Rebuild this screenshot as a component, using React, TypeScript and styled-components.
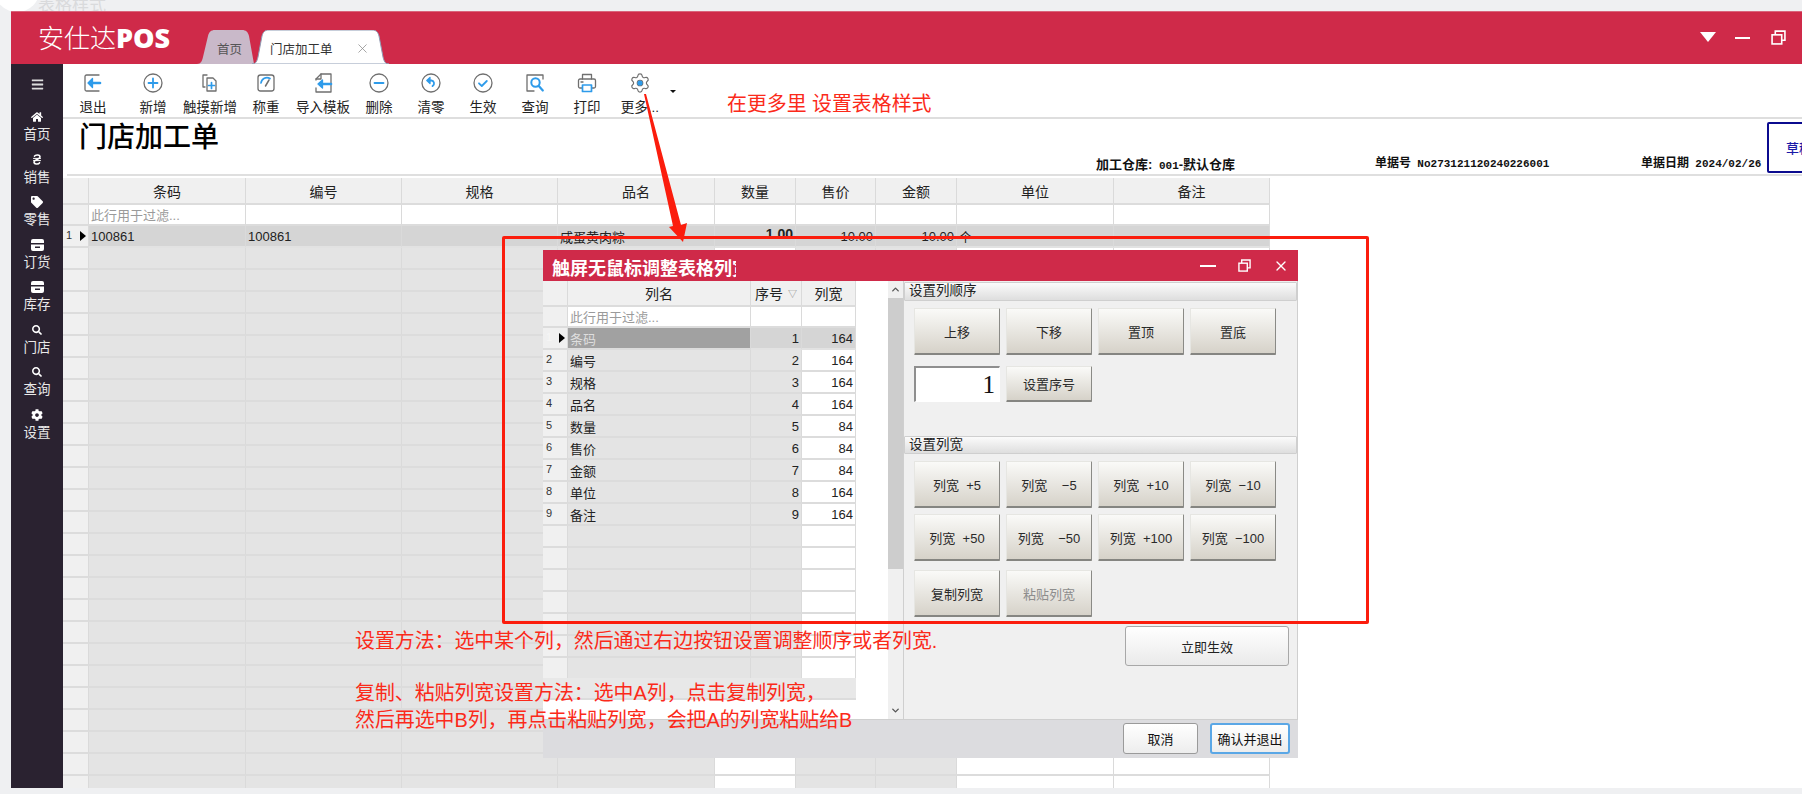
import React from "react";
import styled, { createGlobalStyle } from "styled-components";
import { FaHome, FaTag, FaCog, FaSearch, FaBars } from "react-icons/fa";
import { ChevronUp, ChevronDown, X, Settings } from "lucide-react";

const Global = createGlobalStyle`
  html, body { margin: 0; padding: 0; background: #eff0f2; }
  * { box-sizing: border-box; }
  body { font-family: "Liberation Sans", "Noto Sans CJK SC", sans-serif; }
`;

const Page = styled.div`
  position: relative; width: 1802px; height: 794px; overflow: hidden;
  display: flex; flex-direction: column; background: #eff0f2;
`;
const TopStrip = styled.div`
  position: relative; height: 11px; flex: none; overflow: hidden; padding-left: 38px;
  font-size: 17px; line-height: 12px; color: #d9dadc;
  &::before { content: ""; position: absolute; left: -6px; top: -34px; width: 46px; height: 46px; border-radius: 50%; background: #fff; }
`;
const Windowed = styled.div`
  flex: 1; min-height: 0; margin-left: 11px; display: flex; flex-direction: column;
`;
const Header = styled.header`
  height: 53px; flex: none; background: #cf2a49; display: flex; align-items: flex-end; border-top: 1px solid #d9647b;
  position: relative;
`;
const Logo = styled.div`
  width: 186px; padding-left: 27px; align-self: center; margin-top: -2px; color: #fff; font-size: 26px; font-weight: 300; white-space: nowrap;
  b { font-family: "Open Sans", "Liberation Sans", sans-serif; font-weight: 800; font-size: 27px; }
`;
const Tabs = styled.div` display: flex; align-items: flex-end; height: 34px; `;
const Tab = styled.div<{ $w: number; $active?: boolean }>`
  position: relative; width: ${p => p.$w}px; height: 34px; margin-right: -2px;
  display: flex; align-items: center; font-size: 12.5px; color: ${p => (p.$active ? "#333" : "#555")};
  padding: 2px 0 0 ${p => (p.$active ? 18 : 20)}px;
  z-index: ${p => (p.$active ? 2 : 1)};
  span { position: relative; }
  svg.shape { position: absolute; inset: 0; }
`;
const TabClose = styled.span` position: relative; margin-left: 22px; color: #8a8a8a; display: flex; `;
const WinControls = styled.div`
  margin-left: auto; align-self: center; display: flex; align-items: center; margin-top: -2px; margin-right: 16px; color: #fff;
`;
const Tri = styled.div`
  width: 0; height: 0; border-left: 8px solid transparent; border-right: 8px solid transparent; border-top: 10px solid #fff; margin-right: 19px;
`;
const Dash = styled.div` width: 15px; height: 2px; background: #fff; margin-right: 21px; margin-top: 2px; `;

const Body = styled.div` flex: 1; min-height: 0; display: flex; `;
const Sidebar = styled.nav`
  width: 52px; flex: none; background: #2a2230; color: #e9e9e9; display: flex; flex-direction: column; align-items: center;
`;
const Burger = styled.div` height: 41px; display: flex; align-items: center; color: #ddd; font-size: 13px; `;
const SideItem = styled.div`
  height: 42.5px; padding-top: 5px; display: flex; flex-direction: column; align-items: center; gap: 2px;
`;
const SideIcon = styled.div`
  height: 14px; display: flex; align-items: center; justify-content: center; font-size: 12px; color: #fff;
`;
const SideLabel = styled.div` font-size: 13.5px; line-height: 18px; white-space: nowrap; `;

const Main = styled.main` flex: 1; min-width: 0; background: #fff; display: flex; flex-direction: column; overflow: hidden; `;
const Toolbar = styled.div`
  height: 55px; flex: none; display: flex; border-bottom: 2px solid #dedede;
`;
const ToolItem = styled.div<{ $w: number }>`
  width: ${p => p.$w}px; display: flex; flex-direction: column; align-items: center; padding-top: 9px; color: #222;
`;
const ToolIcon = styled.div` height: 20px; display: flex; align-items: center; `;
const ToolLabel = styled.div` margin-top: 7px; font-size: 13.5px; line-height: 15px; white-space: nowrap; `;
const Caret = styled.div`
  width: 0; height: 0; margin: 26px 0 0 5px; border-left: 3px solid transparent; border-right: 3px solid transparent; border-top: 3px solid #111;
`;
const Info = styled.div`
  height: 57px; flex: none; position: relative; display: flex; align-items: flex-end; margin-left: 4px;
  border-bottom: 2px solid #dfdfdf; margin-bottom: 2px; padding-left: 12px;
`;
const Title = styled.h1`
  position: absolute; left: 12px; top: 2px; margin: 0; font-size: 28px; line-height: 34px; font-weight: 500; color: #000;
`;
const MetaSpacer = styled.div` width: 1017px; flex: none; `;
const Meta = styled.div<{ $w: number; $drop?: number; $size?: number }>`
  width: ${p => p.$w}px; flex: none; font-size: ${p => p.$size ?? 12}px; font-weight: 700; color: #111; white-space: pre; line-height: 14px;
  padding-bottom: ${p => p.$drop ?? 1}px;
  tt { font-family: "Liberation Mono", monospace; font-size: 11px; margin-left: 3px; }
`;
const Draft = styled.div`
  position: absolute; left: 1700px; top: 3px; width: 62px; height: 51px; border: 2px solid #0b0b8f; border-radius: 2px;
  background: #fff; color: #1a1aa8; font-size: 13px; font-weight: 500; display: flex; align-items: center; padding-left: 17px; white-space: nowrap;
`;

const GridWrap = styled.div` flex: 1; min-height: 0; overflow: hidden; `;
const Row = styled.div<{ $cols: string; $h: number }>`
  display: grid; grid-template-columns: ${p => p.$cols}; height: ${p => p.$h}px;
`;
type Tone = "head" | "ind" | "filter" | "sel" | "selDark" | "off" | "on";
const toneBg: Record<Tone, string> = {
  head: "#f0f0f0", ind: "#f0f0f0", filter: "#fff", sel: "#d5d5d5", selDark: "#a1a1a1", off: "#e4e4e4", on: "#fff",
};
const Cell = styled.div<{ $tone: Tone; $align?: string; $muted?: boolean }>`
  background: ${p => toneBg[p.$tone]};
  border-right: 1px solid #dadada;
  border-bottom: 2px solid ${p => (p.$tone === "sel" ? "#e2e2e2" : "#dcdcdc")};
  display: flex; align-items: center; overflow: hidden; white-space: nowrap; position: relative;
  justify-content: ${p => p.$align ?? "flex-start"};
  padding: 0 2px;
  font-size: ${p => (p.$tone === "head" ? 14 : 13)}px;
  color: ${p => (p.$muted ? "#9a9a9a" : p.$tone === "selDark" ? "#dedede" : "#222")};
`;
const IndexNo = styled.span<{ $faint?: boolean }>` font-size: 11px; color: ${p => (p.$faint ? "#f6f6f6" : "#333")}; margin-left: 1px; margin-top: -3px; `;
const Pointer = styled.i`
  position: absolute; right: 2px; top: 5px; width: 0; height: 0;
  border-top: 5px solid transparent; border-bottom: 5px solid transparent; border-left: 6px solid #000;
`;
const Qty = styled.b` font-size: 14px; margin-top: -5px; `;
const Sort = styled.span` font-size: 9px; color: #888; margin-left: 5px; `;

const Modal = styled.section`
  position: absolute; left: 543px; top: 250px; width: 755px; height: 508px; z-index: 3; display: flex; flex-direction: column; background: #dcdcdf;
`;
const ModalTitle = styled.div`
  height: 31px; flex: none; background: #cf2a49; color: #fff; display: flex; align-items: center; padding: 3px 9px 0 9px; font-size: 18px; font-weight: 700;
`;
const ModalCaption = styled.div` width: 184px; overflow: hidden; white-space: nowrap; `;
const ModalWin = styled.div`
  margin-left: auto; display: flex; align-items: center; gap: 22px; margin-top: -3px;
`;
const ModalBody = styled.div` height: 438px; flex: none; display: flex; `;
const LeftPane = styled.div` width: 345px; flex: none; background: #fff; display: flex; flex-direction: column; `;
const ModalRows = styled.div` height: 397px; flex: none; overflow: hidden; width: 313px; `;
const Summary = styled.div` height: 22px; width: 313px; flex: none; background: #e8e8e8; border-bottom: 2px solid #dcdcdc; `;
const Scroll = styled.div` width: 15px; flex: none; background: #f0f0f0; display: flex; flex-direction: column; color: #555; `;
const ScrollBtn = styled.div` height: 17px; flex: none; display: flex; align-items: center; justify-content: center; `;
const Thumb = styled.div` height: 271px; flex: none; background: #cdcdcd; `;
const ScrollRest = styled.div` flex: 1; `;
const Panel = styled.div`
  width: 395px; flex: none; background: #f0f0f0; border-left: 1px solid #cfcfcf; border-right: 1px solid #cfcfcf; display: flex; flex-direction: column;
`;
const Section = styled.div<{ $h: number; $mt?: number }>`
  height: ${p => p.$h}px; flex: none; margin-top: ${p => p.$mt ?? 0}px; padding-left: 4px; font-size: 13.5px; line-height: 16px; color: #222;
  background: linear-gradient(#fbfbfb, #dedede); border: 1px solid #cfcfcf; border-radius: 1px; white-space: nowrap;
`;
const BtnGrid = styled.div<{ $mt: number; $gap?: number }>`
  margin-top: ${p => p.$mt}px; padding-left: 10px; display: grid; grid-template-columns: repeat(4, 86px); column-gap: 6px; row-gap: ${p => p.$gap ?? 0}px;
`;
const GrayBtn = styled.div<{ $h: number; $off?: boolean }>`
  height: ${p => p.$h}px; display: flex; align-items: center; justify-content: center; white-space: pre;
  font-size: 13px; color: ${p => (p.$off ? "#8d8d8d" : "#2a2a2a")};
  background: linear-gradient(#fafaf8, #d6d2c9); border: 1px solid #e6e6e2; border-right-color: #8a8a86; border-bottom: 2px solid #858581; border-radius: 1px;
`;
const NumBox = styled.div`
  height: 36px; background: #fff; border: 1px solid #fff; border-top: 2px solid #8f8f8f; border-left: 2px solid #8f8f8f;
  font-family: "Liberation Serif", serif; font-size: 25px; color: #111; text-align: right; padding-right: 4px; line-height: 33px;
`;
const ApplyBtn = styled.div`
  align-self: flex-end; margin: 9px 8px 0 0; width: 164px; height: 40px; display: flex; align-items: center; justify-content: center; font-size: 13px; color: #222;
  background: linear-gradient(#fff, #eaeaea); border: 1px solid #a8a8a8; border-radius: 3px;
`;
const Foot = styled.div`
  flex: 1; display: flex; justify-content: flex-end; align-items: center; gap: 12px; padding: 0 8px 2px 0; border-top: 1px solid #cfcfcf;
`;
const FootBtn = styled.div<{ $w: number; $primary?: boolean }>`
  width: ${p => p.$w}px; height: 31px; display: flex; align-items: center; justify-content: center; font-size: 13px; color: #111;
  background: linear-gradient(#fff, #ededed); border-radius: 3px;
  border: ${p => (p.$primary ? "2px solid #5aa7e6" : "1px solid #9a9a9a")};
`;

const RedBox = styled.div`
  position: absolute; left: 502px; top: 236px; width: 867px; height: 388px; border: 3px solid #fb1d0d; border-radius: 2px; z-index: 4; pointer-events: none;
`;
const Note = styled.div<{ $x: number; $y: number }>`
  position: absolute; left: ${p => p.$x}px; top: ${p => p.$y}px; z-index: 5; color: #fb2a1a; font-size: 19.9px; line-height: 28px; white-space: pre;
`;
const ArrowLayer = styled.svg` position: absolute; left: 0; top: 0; z-index: 5; pointer-events: none; `;
const BottomStrip = styled.div` height: 6px; flex: none; `;
const GearWrap = styled.span`
  position: relative; display: flex;
  svg.dot { position: absolute; inset: 0; }
`;

const G = "#6f6f6f", B = "#2e9bea";
const Ic: React.FC<{ children: React.ReactNode }> = ({ children }) => (
  <svg width="22" height="22" viewBox="0 0 22 22" fill="none" stroke={G} strokeWidth="1.3" strokeLinecap="round" strokeLinejoin="round">{children}</svg>
);
const toolIcons: Record<string, React.ReactNode> = {
  exit: <Ic><path d="M17 3H4.5A1.5 1.5 0 0 0 3 4.5v13A1.5 1.5 0 0 0 4.5 19H17" /><path d="M8 11h10" stroke={B} strokeWidth="2.6" /><path d="M10.5 6.5 6 11l4.5 4.5z" fill={B} stroke={B} /></Ic>,
  add: <Ic><circle cx="11" cy="11" r="9" /><path d="M11 6.5v9M6.5 11h9" stroke={B} strokeWidth="1.8" /></Ic>,
  touch: <Ic><path d="M8 3H4v12h2" /><path d="M8 6h6l3 3v10H8z" /><path d="M12.5 10.5v6M9.5 13.5h6" stroke={B} strokeWidth="1.7" /></Ic>,
  weigh: <Ic><rect x="3" y="3" width="16" height="16" rx="2.5" /><path d="M6 11a6 6 0 0 1 9-4.5" stroke={B} strokeWidth="1.7" /><path d="M14 8l-3.5 6" stroke={G} strokeWidth="1.5" /></Ic>,
  imp: <Ic><path d="M4 8V7l5-5h10v18H4v-4" /><path d="M9 2v5H4" /><path d="M8 12h11" stroke={B} strokeWidth="2.6" /><path d="M10.5 8 6 12l4.5 4z" fill={B} stroke={B} /></Ic>,
  del: <Ic><circle cx="11" cy="11" r="9" /><path d="M6.5 11h9" stroke={B} strokeWidth="1.8" /></Ic>,
  undo: <Ic><circle cx="11" cy="11" r="9" /><path d="M9 8.5h2.5a3 3 0 0 1 1 5.6" stroke={B} strokeWidth="1.8" /><path d="M10 5.5 6.8 8.5l3.2 3z" fill={B} stroke={B} /></Ic>,
  ok: <Ic><circle cx="11" cy="11" r="9" /><path d="M7 11.3l2.8 2.7 5-5" stroke={B} strokeWidth="1.8" /></Ic>,
  find: <Ic><path d="M19 7V3H3v16h7" /><circle cx="11.5" cy="10.5" r="4.2" stroke={B} strokeWidth="2" /><path d="M14.8 14l4 4.5" stroke={B} strokeWidth="2.2" /></Ic>,
  print: <Ic><path d="M6.5 7V2.5h9V7" /><rect x="2.5" y="7" width="17" height="9" rx="1.5" /><path d="M6.5 13h9v6.5h-9z" fill="#fff" stroke={B} strokeWidth="1.7" /><path d="M5 10h2" /></Ic>,
};
const MoreIcon = () => (
  <GearWrap>
    <Settings size={22} color={G} strokeWidth={1.3} />
    <svg className="dot" width="22" height="22" viewBox="0 0 22 22"><circle cx="11" cy="11" r="2.6" fill={B} /></svg>
  </GearWrap>
);
const tools: [string, string, number][] = [
  ["exit", "退出", 60], ["add", "新增", 60], ["touch", "触摸新增", 54], ["weigh", "称重", 58], ["imp", "导入模板", 56], ["del", "删除", 56],
  ["undo", "清零", 48], ["ok", "生效", 56], ["find", "查询", 48], ["print", "打印", 56],
];

const BoxIcon = () => (
  <svg width="13" height="12" viewBox="0 0 13 12" fill="#fff"><path d="M2 0h9a2 2 0 0 1 2 2v2H0V2a2 2 0 0 1 2-2zM0 5.5h13V10a2 2 0 0 1-2 2H2a2 2 0 0 1-2-2z" /><rect x="4" y="7.5" width="5" height="1.5" fill="#2a2230" /></svg>
);
const MoneyIcon = () => (
  <svg width="10" height="13" viewBox="0 0 10 13" fill="none" stroke="#fff" strokeWidth="1.6" strokeLinecap="round"><path d="M2.5 3.2C3.5 1.5 8 1.5 8 4 8 6.5 2 6.5 2 9c0 2.5 4.5 2.5 5.5.8" /><path d="M1.5 5.4h7M1.5 7.6h7" strokeWidth="1" /></svg>
);
const side: [React.ReactNode, string][] = [
  [<FaHome />, "首页"], [<MoneyIcon />, "销售"], [<FaTag />, "零售"], [<BoxIcon />, "订货"], [<BoxIcon />, "库存"],
  [<FaSearch size={10} />, "门店"], [<FaSearch size={10} />, "查询"], [<FaCog />, "设置"],
];

const mainCols = "26px 157px 156px 156px 157px 81px 80px 81px 157px 156px";
const heads = ["", "条码", "编号", "规格", "品名", "数量", "售价", "金额", "单位", "备注"];
const blankTones: Tone[] = ["ind", "off", "off", "off", "off", "on", "off", "off", "on", "on"];

const modalCols = "25px 183px 51px 54px";
const modalData: [string, number, number][] = [
  ["条码", 1, 164], ["编号", 2, 164], ["规格", 3, 164], ["品名", 4, 164], ["数量", 5, 84], ["售价", 6, 84], ["金额", 7, 84], ["单位", 8, 164], ["备注", 9, 164],
];
const widthBtns = ["列宽  +5", "列宽    −5", "列宽  +10", "列宽  −10", "列宽  +50", "列宽    −50", "列宽  +100", "列宽  −100"];

const RestoreIcon: React.FC<{ s: number }> = ({ s }) => (
  <svg width={s} height={s} viewBox="0 0 14 14" fill="none" stroke="#fff" strokeWidth="1.5"><rect x="1" y="4.5" width="9" height="8.5" /><path d="M4 4.5V1h9v8.5h-3" /></svg>
);

export default function App() {
  return (
    <Page>
      <Global />
      <TopStrip>表格样式</TopStrip>
      <Windowed>
        <Header>
          <Logo>安仕达<b>POS</b></Logo>
          <Tabs>
            <Tab $w={57}>
              <svg className="shape" width="57" height="34" viewBox="0 0 57 34"><path d="M0 34c4 0 5-3 6-7L11 6c1-4 3-6 7-6h27c4 0 6 2 7 6l5 28z" fill="#c9b9c9" /></svg>
              <span>首页</span>
            </Tab>
            <Tab $w={137} $active>
              <svg className="shape" width="137" height="34" viewBox="0 0 137 34"><path d="M0 34c4 0 5-3 6-7L10 6c1-4 3-6 7-6h103c4 0 6 2 7 6l4 21c1 4 2 7 6 7z" fill="#fff" stroke="#8f9db5" strokeWidth="1" /></svg>
              <span>门店加工单</span>
              <TabClose><X size={15} strokeWidth={1.2} /></TabClose>
            </Tab>
          </Tabs>
          <WinControls>
            <Tri />
            <Dash />
            <RestoreIcon s={15} />
          </WinControls>
        </Header>
        <Body>
          <Sidebar>
            <Burger><FaBars /></Burger>
            {side.map(([icon, label]) => (
              <SideItem key={label}>
                <SideIcon>{icon}</SideIcon>
                <SideLabel>{label}</SideLabel>
              </SideItem>
            ))}
          </Sidebar>
          <Main>
            <Toolbar>
              {tools.map(([k, label, w]) => (
                <ToolItem key={k} $w={w}>
                  <ToolIcon>{toolIcons[k]}</ToolIcon>
                  <ToolLabel>{label}</ToolLabel>
                </ToolItem>
              ))}
              <ToolItem $w={50}>
                <ToolIcon><MoreIcon /></ToolIcon>
                <ToolLabel>更多...</ToolLabel>
              </ToolItem>
              <Caret />
            </Toolbar>
            <Info>
              <Title>门店加工单</Title>
              <MetaSpacer />
              <Meta $w={279} $size={13}>加工仓库: <tt>001</tt>-默认仓库</Meta>
              <Meta $w={266} $drop={3}>单据号 <tt>No273121120240226001</tt></Meta>
              <Meta $w={130} $drop={3}>单据日期 <tt>2024/02/26</tt></Meta>
              <Draft>草稿</Draft>
            </Info>
            <GridWrap>
              <Row $cols={mainCols} $h={27}>
                {heads.map((h, i) => <Cell key={i} $tone="head" $align="center">{h}</Cell>)}
              </Row>
              <Row $cols={mainCols} $h={21}>
                {heads.map((_, i) => (
                  <Cell key={i} $tone={i === 0 ? "ind" : "filter"} $muted>{i === 1 ? "此行用于过滤..." : ""}</Cell>
                ))}
              </Row>
              <Row $cols={mainCols} $h={22}>
                <Cell $tone="ind"><IndexNo>1</IndexNo><Pointer /></Cell>
                <Cell $tone="sel">100861</Cell>
                <Cell $tone="sel">100861</Cell>
                <Cell $tone="sel" />
                <Cell $tone="sel">咸蛋黄肉粽</Cell>
                <Cell $tone="sel" $align="flex-end"><Qty>1.00</Qty></Cell>
                <Cell $tone="sel" $align="flex-end">10.00</Cell>
                <Cell $tone="sel" $align="flex-end">10.00</Cell>
                <Cell $tone="sel">个</Cell>
                <Cell $tone="sel" />
              </Row>
              {Array.from({ length: 25 }).map((_, r) => (
                <Row key={r} $cols={mainCols} $h={22}>
                  {blankTones.map((t, i) => <Cell key={i} $tone={t} />)}
                </Row>
              ))}
            </GridWrap>
          </Main>
        </Body>
      </Windowed>
      <BottomStrip />

      <Modal>
        <ModalTitle>
          <ModalCaption>触屏无鼠标调整表格列宽</ModalCaption>
          <ModalWin>
            <svg width="16" height="14" viewBox="0 0 16 14"><rect x="0" y="6" width="16" height="2" fill="#fff" /></svg>
            <RestoreIcon s={13} />
            <X size={16} color="#fff" strokeWidth={2} />
          </ModalWin>
        </ModalTitle>
        <ModalBody>
          <LeftPane>
            <ModalRows>
              <Row $cols={modalCols} $h={26}>
                <Cell $tone="head" />
                <Cell $tone="head" $align="center">列名</Cell>
                <Cell $tone="head" $align="center">序号<Sort>▽</Sort></Cell>
                <Cell $tone="head" $align="center">列宽</Cell>
              </Row>
              <Row $cols={modalCols} $h={21}>
                <Cell $tone="ind" />
                <Cell $tone="filter" $muted>此行用于过滤...</Cell>
                <Cell $tone="filter" />
                <Cell $tone="filter" />
              </Row>
              {modalData.map(([name, no, w], i) => (
                <Row key={name} $cols={modalCols} $h={22}>
                  <Cell $tone="ind"><IndexNo $faint={i === 0}>{no}</IndexNo>{i === 0 && <Pointer />}</Cell>
                  <Cell $tone={i === 0 ? "selDark" : "off"}>{name}</Cell>
                  <Cell $tone={i === 0 ? "sel" : "off"} $align="flex-end">{no}</Cell>
                  <Cell $tone={i === 0 ? "sel" : "on"} $align="flex-end">{w}</Cell>
                </Row>
              ))}
              {Array.from({ length: 8 }).map((_, r) => (
                <Row key={r} $cols={modalCols} $h={22}>
                  <Cell $tone="ind" />
                  <Cell $tone="off" />
                  <Cell $tone="off" />
                  <Cell $tone="on" />
                </Row>
              ))}
            </ModalRows>
            <Summary />
          </LeftPane>
          <Scroll>
            <ScrollBtn><ChevronUp size={11} strokeWidth={3} /></ScrollBtn>
            <Thumb />
            <ScrollRest />
            <ScrollBtn><ChevronDown size={11} strokeWidth={3} /></ScrollBtn>
          </Scroll>
          <Panel>
            <Section $h={19} $mt={1}>设置列顺序</Section>
            <BtnGrid $mt={7}>
              {["上移", "下移", "置顶", "置底"].map(t => <GrayBtn key={t} $h={47}>{t}</GrayBtn>)}
            </BtnGrid>
            <BtnGrid $mt={11}>
              <NumBox>1</NumBox>
              <GrayBtn $h={36}>设置序号</GrayBtn>
            </BtnGrid>
            <Section $h={18} $mt={34}>设置列宽</Section>
            <BtnGrid $mt={7} $gap={6}>
              {widthBtns.map(t => <GrayBtn key={t} $h={47}>{t}</GrayBtn>)}
            </BtnGrid>
            <BtnGrid $mt={9}>
              <GrayBtn $h={47}>复制列宽</GrayBtn>
              <GrayBtn $h={47} $off>粘贴列宽</GrayBtn>
            </BtnGrid>
            <ApplyBtn>立即生效</ApplyBtn>
          </Panel>
        </ModalBody>
        <Foot>
          <FootBtn $w={75}>取消</FootBtn>
          <FootBtn $w={80} $primary>确认并退出</FootBtn>
        </Foot>
      </Modal>
      <RedBox />
      <Note $x={727} $y={90}>在更多里 设置表格样式</Note>
      <Note $x={355} $y={627}>设置方法：选中某个列，然后通过右边按钮设置调整顺序或者列宽.</Note>
      <Note $x={355} $y={679}>复制、粘贴列宽设置方法：选中A列，点击复制列宽，</Note>
      <Note $x={355} $y={706}>然后再选中B列，再点击粘贴列宽，会把A的列宽粘贴给B</Note>
      <ArrowLayer width="1802" height="794" viewBox="0 0 1802 794">
        <path d="M644 94 L673 226 L669 227 L683 242 L687 223 L681 225 L646 94 Z" fill="#fb1d0d" />
      </ArrowLayer>
    </Page>
  );
}
